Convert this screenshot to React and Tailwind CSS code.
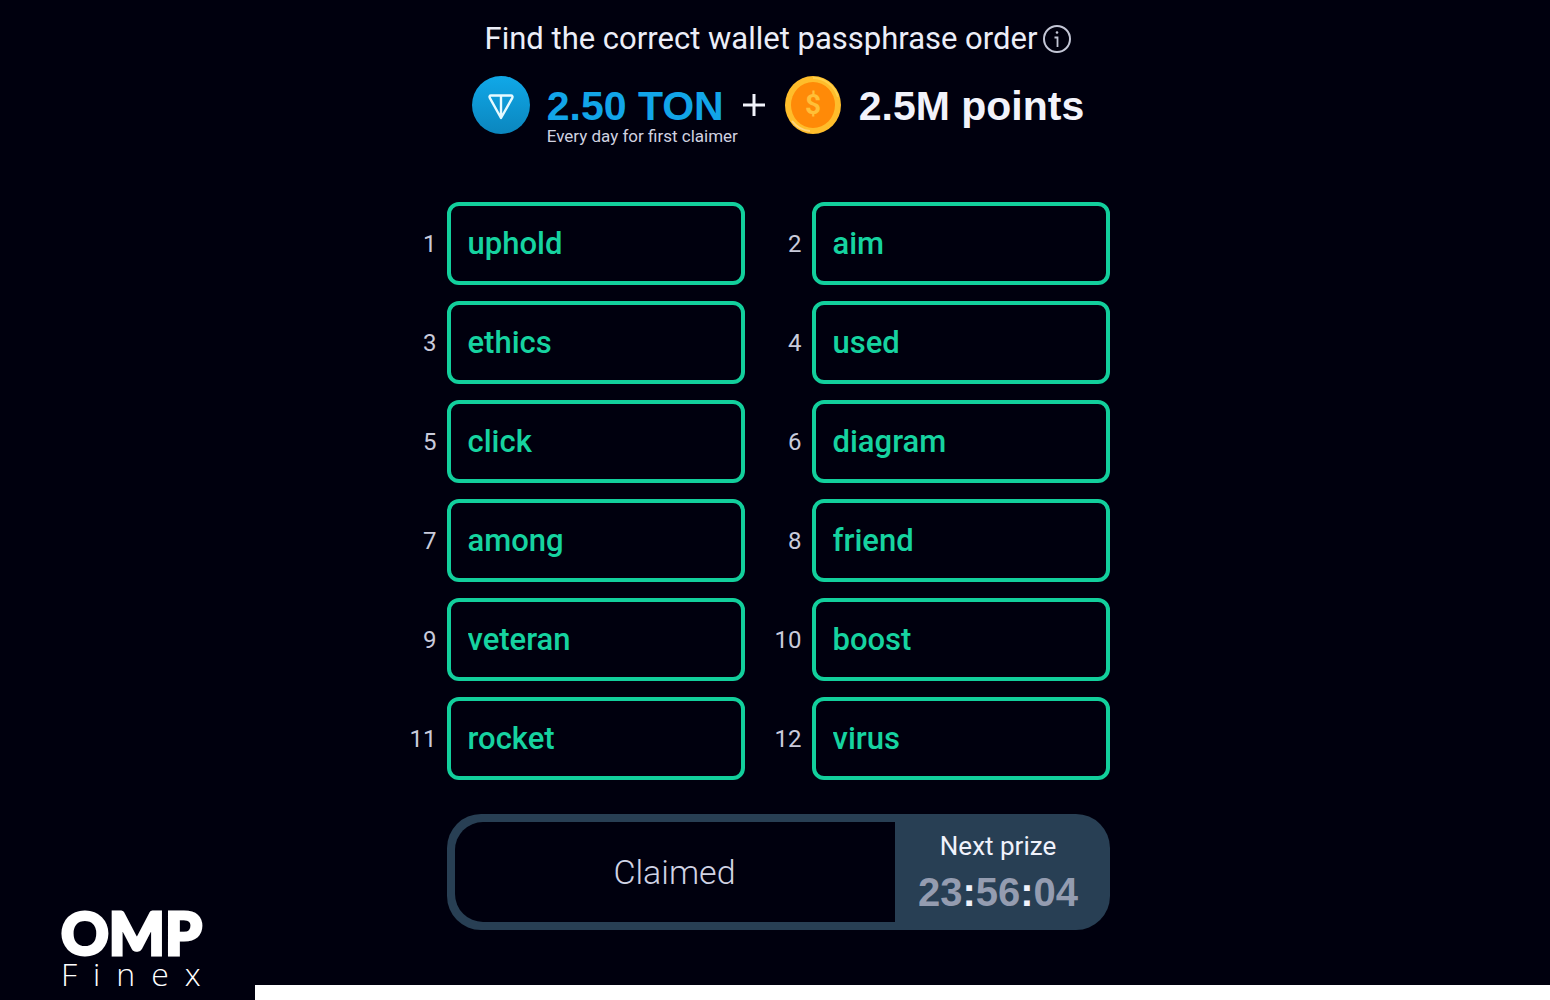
import React from 'react';

const WORDS = [
  'uphold',
  'aim',
  'ethics',
  'used',
  'click',
  'diagram',
  'among',
  'friend',
  'veteran',
  'boost',
  'rocket',
  'virus',
];

const InfoIcon = () => (
  <svg viewBox="0 0 28 28" className="h-7 w-7" fill="none" stroke="#c3c6d6" aria-hidden="true">
    <circle cx="14" cy="14" r="13" strokeWidth="2" />
    <path d="M11.5 12.5h3V22" strokeWidth="1.8" />
    <circle cx="14" cy="7.5" r="1.3" fill="#c3c6d6" stroke="none" />
  </svg>
);

const TonIcon = () => (
  <svg viewBox="0 0 58 58" className="h-[58px] w-[58px] shrink-0" aria-hidden="true">
    <defs>
      <linearGradient id="ton" x1="0" y1="0" x2="0" y2="1">
        <stop offset="0" stopColor="#10a8e8" />
        <stop offset="1" stopColor="#0b86be" />
      </linearGradient>
    </defs>
    <circle cx="29" cy="29" r="29" fill="url(#ton)" />
    <path
      d="M19 19.5h20c1.4 0 1.8 1 1.3 2.4L29 42 17.800 21.900c-.6-1.4-.2-2.4 1.2-2.4zM29 20v20"
      fill="none"
      stroke="#e6faff"
      strokeWidth="2.4"
      strokeLinejoin="round"
    />
  </svg>
);

const CoinIcon = () => (
  <svg viewBox="0 0 56 58" className="h-[58px] w-14 shrink-0" aria-hidden="true">
    <ellipse cx="28" cy="29" rx="28" ry="29" fill="#ffbd2b" />
    <path d="M28 2a26 27 0 0 1 25 19" fill="none" stroke="#ffd04a" strokeWidth="2" />
    <path d="M7 45a26 27 0 0 0 18 10" fill="none" stroke="#ffd47a" strokeWidth="2" />
    <ellipse cx="28" cy="29" rx="22" ry="23" fill="#ff8a08" />
    <text
      x="28"
      y="38"
      textAnchor="middle"
      fill="#ffc038"
      className="font-['Roboto',sans-serif] text-[28px] font-bold"
    >
      $
    </text>
  </svg>
);

const WordField = ({ index, word }) => (
  <div className="flex items-center gap-2.5">
    <label htmlFor={`word-${index}`} className="w-[30px] text-right text-2xl text-[#c9cbdb]">
      {index}
    </label>
    <input
      id={`word-${index}`}
      type="text"
      value={word}
      readOnly
      className="h-[83px] min-w-0 flex-1 rounded-xl border-4 border-[#12cf9c] bg-transparent px-[17px] text-[31px] font-medium text-[#16d3a0] outline-none"
    />
  </div>
);

const Header = () => (
  <header className="flex flex-col items-center">
    <div className="flex items-center gap-1.5">
      <h1 className="text-[31px] leading-9 text-[#eceef8]">Find the correct wallet passphrase order</h1>
      <button type="button" aria-label="Info">
        <InfoIcon />
      </button>
    </div>
    <div className="mt-[19px] flex items-start font-['Liberation_Sans',Arial,sans-serif] text-[41px] leading-[60px] font-bold">
      <TonIcon />
      <div className="ml-[17px] w-[196px]">
        <span className="block text-[#12a5e8]">2.50 TON</span>
        <p className="-mt-2 font-['Roboto',sans-serif] text-[17px] leading-4 font-normal whitespace-nowrap text-[#d0d2e0]">
          Every day for first claimer
        </p>
      </div>
      <svg viewBox="0 0 22 22" className="mt-[18px] h-[22px] w-[22px]" stroke="#f2f3fb" strokeWidth="3">
        <path d="M0 11h22M11 0v22" />
      </svg>
      <div className="ml-5 flex gap-[18px]">
        <CoinIcon />
        <span className="text-[#f2f3fb]">2.5M points</span>
      </div>
    </div>
  </header>
);

const ClaimPanel = () => (
  <section className="ml-10 mt-[34px] flex h-[116px] rounded-[34px] bg-[#283f54] p-2">
    <button type="button" className="flex-1 rounded-l-[28px] bg-[#00000e] text-[34px] font-light text-[#d0d3e4]">
      Claimed
    </button>
    <div className="flex w-[207px] flex-col items-center justify-center">
      <p className="text-[26px] leading-8 text-[#f0f2fc]">Next prize</p>
      <p className="mt-2 font-['Liberation_Sans',Arial,sans-serif] text-[40px] leading-11 font-bold text-[#949cb0]">
        23<span className="text-[#f0f2fc]">:</span>56<span className="text-[#f0f2fc]">:</span>04
      </p>
    </div>
  </section>
);

const Footer = () => (
  <footer className="col-start-1 row-start-1 flex items-end self-end">
    <div className="w-[255px] pb-3 pl-[61px] text-white">
      <div className="font-['Lato',sans-serif] text-[59px] leading-[54px] font-black [-webkit-text-stroke:3px_white]">
        OMP
      </div>
      <div className="font-['Open_Sans',sans-serif] text-[32px] leading-7 font-light tracking-[16px]">Finex</div>
    </div>
    <div className="h-[15px] flex-1 bg-white" />
  </footer>
);

const App = () => (
  <div className="grid min-h-screen bg-[#00000e] font-['Roboto',sans-serif]">
    <main className="col-start-1 row-start-1 flex flex-col items-center pt-[21px] pb-10 pl-1.5">
      <Header />
      <div className="mt-[58px] mr-10 w-full max-w-[703px]">
        <div className="grid grid-cols-2 gap-x-[27px] gap-y-4">
          {WORDS.map((word, i) => (
            <WordField key={word} index={i + 1} word={word} />
          ))}
        </div>
        <ClaimPanel />
      </div>
    </main>
    <Footer />
  </div>
);

export default App;
